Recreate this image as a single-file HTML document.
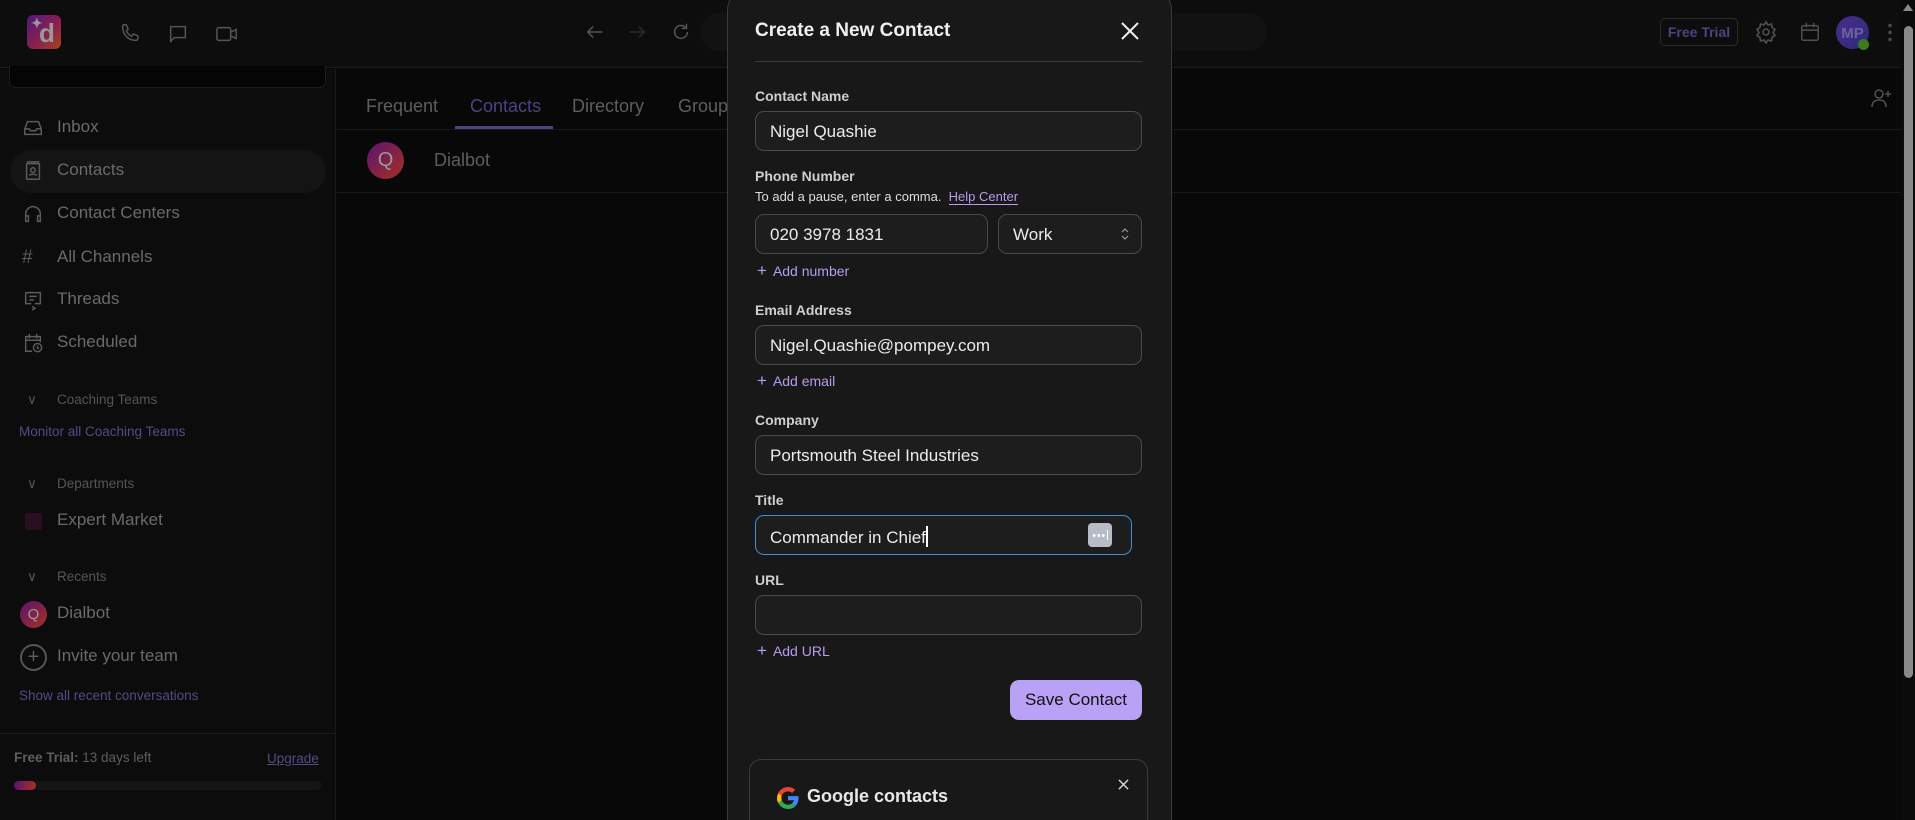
<!DOCTYPE html>
<html><head><meta charset="utf-8"><style>
*{box-sizing:border-box;margin:0;padding:0}
html,body{width:1915px;height:820px;overflow:hidden}
body{background:#080808;font-family:"Liberation Sans",sans-serif;position:relative;color:#777}
.a{position:absolute}
.top{left:0;top:0;width:1901px;height:68px;background:#0d0d0d;border-bottom:1px solid #1c1c1c}
.side{left:0;top:69px;width:336px;height:751px;background:#0c0c0c;border-right:1px solid #1a1a1a}
.it{position:absolute;left:57px;font-size:17px;color:#6a6a6a}
.ic{position:absolute;left:22px;width:22px;height:22px}
.sec{position:absolute;left:57px;font-size:13.5px;color:#555}
.pl{position:absolute;font-size:13.5px;color:#544a84}
.lbl{position:absolute;left:755px;font-size:14px;font-weight:bold;color:#cfcfcf}
.inp{position:absolute;left:755px;width:387px;height:40px;border:1px solid #4a4a4a;border-radius:9px;background:#1d1d1d;color:#ececec;font-size:17px;padding:10px 0 0 14px}
.add{position:absolute;left:757px;font-size:14px;color:#b79cf0}
.add b{font-weight:normal;font-size:17px;margin-right:6px}
svg{display:block}
</style></head><body>
<div class="a top"></div>
<div class="a" style="left:27px;top:15px;width:34px;height:34px;border-radius:6px;background:linear-gradient(135deg,#4a1a7a,#8a1f4f 55%,#a6441e);color:#999;font-size:26px;font-weight:bold;text-align:center;line-height:34px"><span style="position:relative;left:3px;top:1px">d</span><span style="position:absolute;left:4px;top:-9px;font-size:14px">✦</span></div>
<svg class="a" style="left:119px;top:22px" width="22" height="22" viewBox="0 0 24 24" fill="none" stroke="#555" stroke-width="1.6"><path d="M5 3h3l2 5-2 1.5a11 11 0 0 0 6 6L15.5 13l5 2v3a2 2 0 0 1-2 2C10 20 4 14 4 5a2 2 0 0 1 1-2z"/></svg>
<svg class="a" style="left:167px;top:23px" width="22" height="22" viewBox="0 0 24 24" fill="none" stroke="#555" stroke-width="1.6"><path d="M4 4h16v12H8l-4 4z"/></svg>
<svg class="a" style="left:215px;top:23px" width="24" height="22" viewBox="0 0 26 24" fill="none" stroke="#555" stroke-width="1.6"><rect x="2" y="5" width="15" height="14" rx="2"/><path d="M17 10l6-3v10l-6-3"/></svg>
<svg class="a" style="left:584px;top:21px" width="22" height="22" viewBox="0 0 24 24" fill="none" stroke="#555" stroke-width="1.6"><path d="M20 12H4M10 6l-6 6 6 6"/></svg>
<svg class="a" style="left:626px;top:21px" width="22" height="22" viewBox="0 0 24 24" fill="none" stroke="#2c2c2c" stroke-width="1.6"><path d="M4 12h16M14 6l6 6-6 6"/></svg>
<svg class="a" style="left:670px;top:21px" width="22" height="22" viewBox="0 0 24 24" fill="none" stroke="#555" stroke-width="1.6"><path d="M19 12a7 7 0 1 1-2-5M18 3v5h-5"/></svg>
<div class="a" style="left:700px;top:13px;width:567px;height:38px;border-radius:19px;background:#121212"></div>
<div class="a" style="left:1660px;top:18px;width:78px;height:28px;border:1px solid #2a2a2a;border-radius:5px;color:#4a4480;font-size:14px;font-weight:bold;text-align:center;line-height:26px">Free Trial</div>
<svg class="a" style="left:1754px;top:20px" width="24" height="24" viewBox="0 0 24 24" fill="none" stroke="#505050" stroke-width="1.6"><circle cx="12" cy="12" r="3"/><path d="M12 2l2 3 3.5-1 .5 3.5 3 2-2 3 2 3-3 2-.5 3.5-3.5-1-2 3-2-3-3.5 1-.5-3.5-3-2 2-3-2-3 3-2L6.5 4 10 5z"/></svg>
<svg class="a" style="left:1799px;top:21px" width="22" height="22" viewBox="0 0 24 24" fill="none" stroke="#505050" stroke-width="1.6"><rect x="3" y="5" width="18" height="16" rx="2"/><path d="M3 10h18M8 2v5M16 2v5"/></svg>
<div class="a" style="left:1836px;top:16px;width:33px;height:33px;border-radius:50%;background:linear-gradient(135deg,#4c2e8a,#2a2a7a);color:#6a62a0;font-weight:bold;font-size:15px;text-align:center;line-height:36px">MP</div>
<div class="a" style="left:1858px;top:39px;width:11px;height:11px;border-radius:50%;background:#3d7a1e"></div>
<div class="a" style="left:1888px;top:22px;width:4px;height:20px;background:radial-gradient(circle,#4a4a4a 1.6px,transparent 2px) 0 0/4px 7px"></div>
<div class="a" style="left:1901px;top:0;width:14px;height:820px;background:#0b0b0b"></div>
<div class="a" style="left:1904px;top:26px;width:9px;height:652px;border-radius:5px;background:#8a8a8a"></div>
<div class="a" style="left:1903px;top:4px;width:0;height:0;border-left:5px solid transparent;border-right:5px solid transparent;border-bottom:7px solid #8a8a8a"></div>

<div class="a side"></div>
<div class="a" style="left:9px;top:66px;width:317px;height:22px;background:#050505;border:1px solid #1c1c1c;border-top:none;border-radius:0 0 6px 6px"></div>
<div class="a" style="left:10px;top:150px;width:316px;height:43px;border-radius:22px;background:#141414"></div>
<svg class="ic" style="top:117px" viewBox="0 0 24 24" fill="none" stroke="#5c5c5c" stroke-width="1.6"><path d="M3 13l3-8h12l3 8v6H3z M3 13h5l1 2h6l1-2h5"/></svg>
<div class="it" style="top:117px">Inbox</div>
<svg class="ic" style="top:160px" viewBox="0 0 24 24" fill="none" stroke="#5c5c5c" stroke-width="1.6"><rect x="5" y="4" width="14" height="17" rx="1"/><circle cx="12" cy="11" r="2.5"/><path d="M8 17c1-2 7-2 8 0M5 2h14"/></svg>
<div class="it" style="top:160px">Contacts</div>
<svg class="ic" style="top:203px" viewBox="0 0 24 24" fill="none" stroke="#5c5c5c" stroke-width="1.6"><path d="M4 18v-6a8 8 0 0 1 16 0v6M4 14h3v6H4zM17 14h3v6h-3z"/></svg>
<div class="it" style="top:203px">Contact Centers</div>
<div class="it" style="top:247px;left:22px;font-size:19px;color:#5c5c5c">#</div>
<div class="it" style="top:247px">All Channels</div>
<svg class="ic" style="top:289px" viewBox="0 0 24 24" fill="none" stroke="#5c5c5c" stroke-width="1.6"><path d="M4 4h16v12h-6M4 4v12h6M8 8h8M8 12h5M11 19l3 2-3 2"/></svg>
<div class="it" style="top:289px">Threads</div>
<svg class="ic" style="top:332px" viewBox="0 0 24 24" fill="none" stroke="#5c5c5c" stroke-width="1.6"><path d="M11 21H4V5h16v6M4 9h16M8 2v5M16 2v5"/><circle cx="17" cy="17" r="4.5"/><path d="M17 15v2.5l1.5 1"/></svg>
<div class="it" style="top:332px">Scheduled</div>
<div class="sec" style="top:392px;left:27px">∨</div><div class="sec" style="top:392px">Coaching Teams</div>
<div class="pl" style="top:424px;left:19px">Monitor all Coaching Teams</div>
<div class="sec" style="top:476px;left:27px">∨</div><div class="sec" style="top:476px">Departments</div>
<div class="a" style="left:25px;top:513px;width:17px;height:17px;background:#2a0e22;border-radius:2px"></div>
<div class="it" style="top:510px">Expert Market</div>
<div class="sec" style="top:569px;left:27px">∨</div><div class="sec" style="top:569px">Recents</div>
<div class="a" style="left:20px;top:601px;width:27px;height:27px;border-radius:50%;background:linear-gradient(135deg,#5a1470,#a63020);color:#999;font-size:15px;text-align:center;line-height:27px">Q</div>
<div class="it" style="top:603px">Dialbot</div>
<div class="a" style="left:20px;top:644px;width:27px;height:27px;border-radius:50%;border:2px solid #555;color:#5c5c5c;font-size:20px;text-align:center;line-height:22px">+</div>
<div class="it" style="top:646px">Invite your team</div>
<div class="pl" style="top:688px;left:19px">Show all recent conversations</div>
<div class="a" style="left:0;top:733px;width:336px;height:1px;background:#1c1c1c"></div>
<div class="a" style="left:14px;top:750px;font-size:13.5px;color:#5e5e5e"><b>Free Trial:</b> 13 days left</div>
<div class="a" style="left:267px;top:751px;font-size:13.5px;color:#544a84;text-decoration:underline">Upgrade</div>
<div class="a" style="left:14px;top:781px;width:308px;height:9px;border-radius:5px;background:#151515"></div>
<div class="a" style="left:14px;top:781px;width:22px;height:9px;border-radius:5px;background:linear-gradient(90deg,#5a1470,#a63020)"></div>

<div class="a" style="left:366px;top:96px;font-size:18px;color:#5e5e5e">Frequent</div>
<div class="a" style="left:470px;top:96px;font-size:18px;color:#4a4480">Contacts</div>
<div class="a" style="left:572px;top:96px;font-size:18px;color:#5e5e5e">Directory</div>
<div class="a" style="left:678px;top:96px;font-size:18px;color:#5e5e5e">Groups</div>
<div class="a" style="left:337px;top:129px;width:1564px;height:1px;background:#1a1a1a"></div>
<div class="a" style="left:455px;top:126px;width:98px;height:3px;background:#4a4480"></div>
<div class="a" style="left:367px;top:142px;width:37px;height:37px;border-radius:50%;background:linear-gradient(135deg,#5a1470,#a63020);color:#999;font-size:20px;text-align:center;line-height:37px">Q</div>
<div class="a" style="left:434px;top:150px;font-size:18px;color:#5e5e5e">Dialbot</div>
<div class="a" style="left:337px;top:192px;width:1564px;height:1px;background:#1a1a1a"></div>
<svg class="a" style="left:1869px;top:86px" width="24" height="24" viewBox="0 0 24 24" fill="none" stroke="#505050" stroke-width="1.6"><circle cx="10" cy="8" r="4"/><path d="M3 21c0-5 3-7 7-7s7 2 7 7M19 5v6M16 8h6"/></svg>

<div class="a" style="left:727px;top:-12px;width:445px;height:832px;background:#181818;border:1px solid #3a3a3a;border-bottom:none;border-radius:22px 22px 0 0"></div>
<div class="a" style="left:755px;top:20px;font-size:19px;font-weight:bold;color:#f0f0f0">Create a New Contact</div>
<svg class="a" style="left:1121px;top:22px" width="18" height="18" viewBox="0 0 18 18" stroke="#eee" stroke-width="2"><path d="M1 1l16 16M17 1L1 17"/></svg>
<div class="a" style="left:755px;top:61px;width:387px;height:1px;background:#3a3a3a"></div>
<div class="lbl" style="top:88px">Contact Name</div>
<div class="inp" style="top:111px">Nigel Quashie</div>
<div class="lbl" style="top:168px">Phone Number</div>
<div class="a" style="left:755px;top:189px;font-size:13px;color:#ddd">To add a pause, enter a comma.&nbsp; <span style="color:#b79cf0;border-bottom:1px solid #b79cf0">Help Center</span></div>
<div class="inp" style="top:214px;width:233px">020 3978 1831</div>
<div class="inp" style="top:214px;left:998px;width:144px">Work<svg class="a" style="right:12px;top:12px" width="8" height="14" viewBox="0 0 8 14" fill="none" stroke="#999" stroke-width="1.2"><path d="M1 5l3-3 3 3M1 9l3 3 3-3"/></svg></div>
<div class="add" style="top:261px"><b>+</b>Add number</div>
<div class="lbl" style="top:302px">Email Address</div>
<div class="inp" style="top:325px">Nigel.Quashie@pompey.com</div>
<div class="add" style="top:371px"><b>+</b>Add email</div>
<div class="lbl" style="top:412px">Company</div>
<div class="inp" style="top:435px">Portsmouth Steel Industries</div>
<div class="lbl" style="top:492px">Title</div>
<div class="inp" style="top:515px;width:377px;border-color:#3b8fd6">Commander in Chief<span style="display:inline-block;width:2px;height:21px;background:#fff;vertical-align:-4px"></span></div>
<div class="a" style="left:1088px;top:523px;width:24px;height:24px;border-radius:4px;background:#b7bcc6"><div class="a" style="left:4px;top:11px;width:14px;height:3px;background:radial-gradient(circle,#fff 1.3px,transparent 1.6px) 0 0/4.5px 3px"></div><div class="a" style="left:19px;top:7px;width:1px;height:10px;background:#fff"></div></div>
<div class="lbl" style="top:572px">URL</div>
<div class="inp" style="top:595px"></div>
<div class="add" style="top:641px"><b>+</b>Add URL</div>
<div class="a" style="left:1010px;top:680px;width:132px;height:40px;border-radius:9px;background:#b9a2f5;color:#111;font-size:17px;text-align:center;line-height:40px">Save Contact</div>
<div class="a" style="left:749px;top:759px;width:399px;height:70px;border:1px solid #3a3a3a;border-bottom:none;border-radius:12px 12px 0 0"></div>
<svg class="a" style="left:777px;top:787px" width="22" height="22" viewBox="0 0 48 48"><path fill="#EA4335" d="M24 9.5c3.5 0 6.6 1.2 9 3.5l6.7-6.7C35.6 2.4 30.2 0 24 0 14.6 0 6.6 5.4 2.6 13.3l7.8 6C12.3 13.4 17.7 9.5 24 9.5z"/><path fill="#4285F4" d="M46.9 24.5c0-1.6-.1-3.1-.4-4.5H24v9h12.9c-.6 3-2.3 5.5-4.8 7.2l7.5 5.8c4.4-4 7.3-10 7.3-17.5z"/><path fill="#FBBC05" d="M10.4 28.7A14.5 14.5 0 0 1 9.5 24c0-1.6.3-3.2.9-4.7l-7.8-6A24 24 0 0 0 0 24c0 3.9.9 7.5 2.6 10.7z"/><path fill="#34A853" d="M24 48c6.5 0 11.9-2.1 15.9-5.8l-7.5-5.8c-2.1 1.4-4.8 2.3-8.4 2.3-6.3 0-11.700-4.2-13.6-10l-7.8 6C6.6 42.6 14.6 48 24 48z"/></svg>
<div class="a" style="left:807px;top:786px;font-size:18px;font-weight:bold;color:#e8e8e8">Google contacts</div>
<svg class="a" style="left:1118px;top:779px" width="11" height="11" viewBox="0 0 12 12" stroke="#ddd" stroke-width="1.5"><path d="M1 1l10 10M11 1L1 11"/></svg>
</body></html>
